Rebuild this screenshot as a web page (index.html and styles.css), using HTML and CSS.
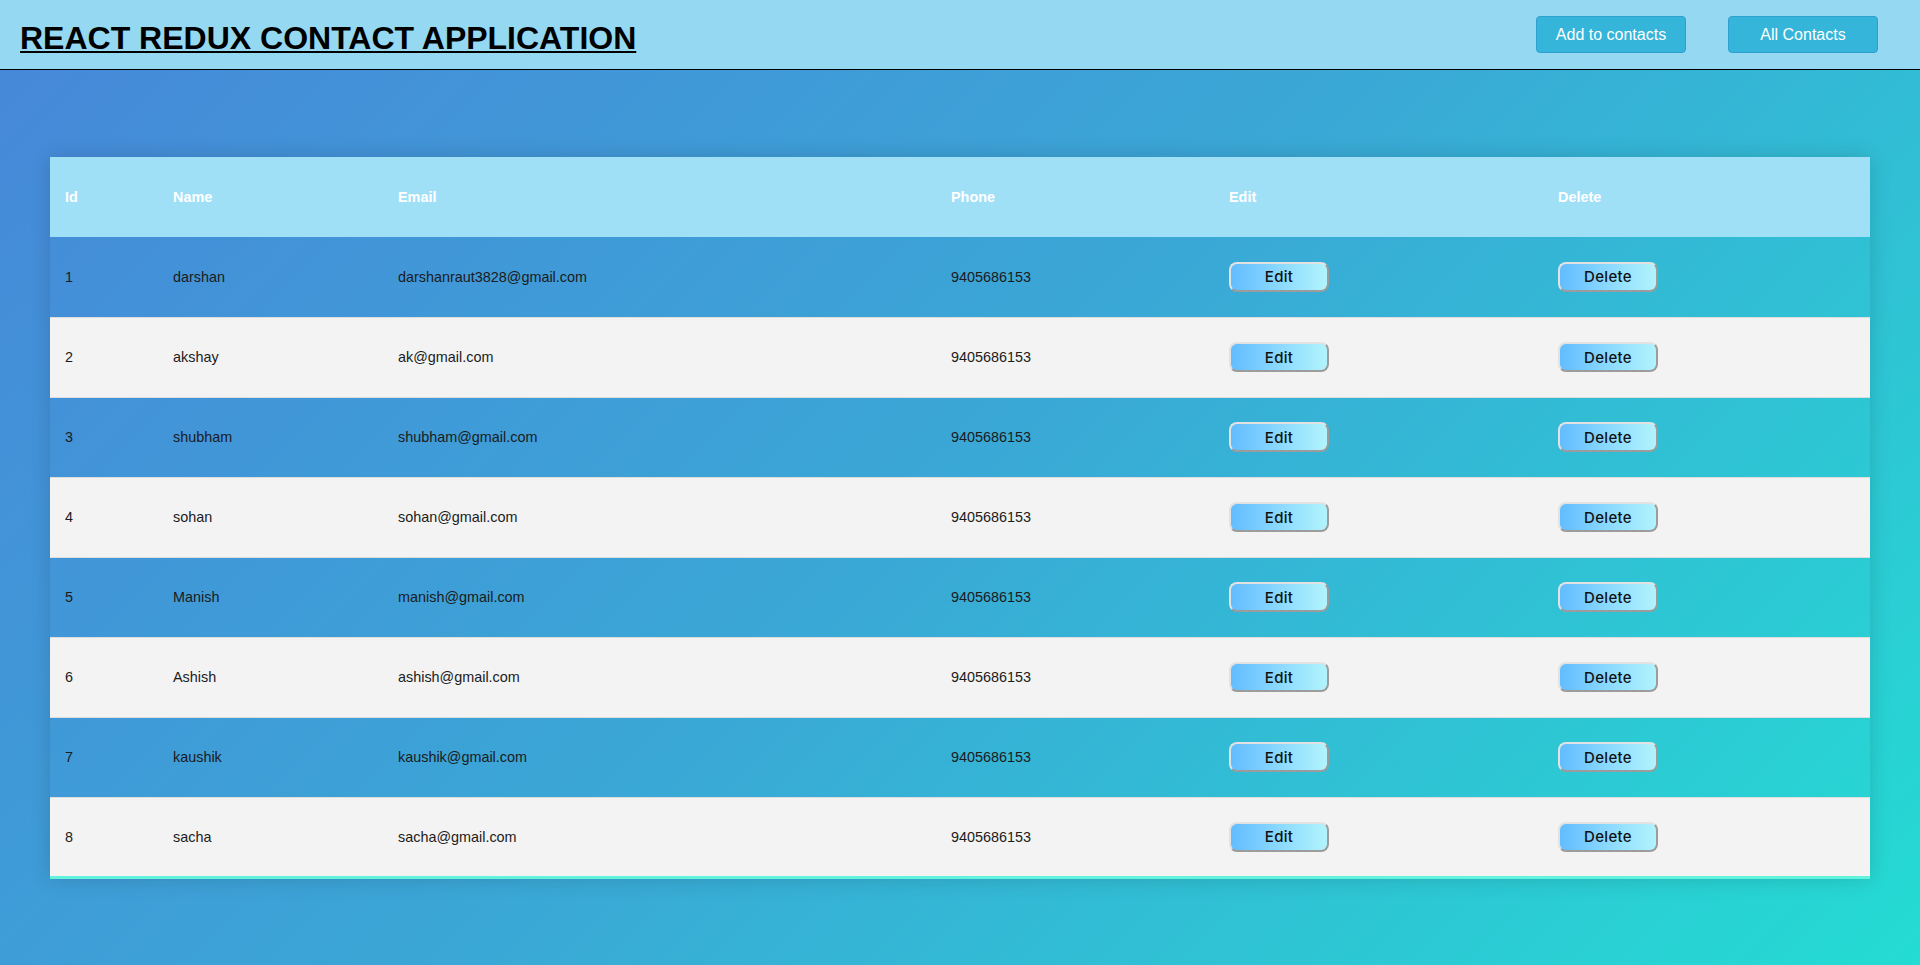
FILE: index.html
```html
<!DOCTYPE html>
<html lang="en">
<head>
<meta charset="utf-8">
<title>React Redux Contact Application</title>
<link rel="stylesheet" href="styles.css">
</head>
<body>
<header class="topbar">
  <h1 class="title">REACT REDUX CONTACT APPLICATION</h1>
  <nav class="nav">
    <button class="nav-btn">Add to contacts</button>
    <button class="nav-btn">All Contacts</button>
  </nav>
</header>
<main class="content">
  <table class="contacts">
    <colgroup>
      <col class="c-id"><col class="c-name"><col class="c-email"><col class="c-phone"><col class="c-edit"><col class="c-delete">
    </colgroup>
    <thead>
      <tr><th>Id</th><th>Name</th><th>Email</th><th>Phone</th><th>Edit</th><th>Delete</th></tr>
    </thead>
    <tbody>
      <tr><td>1</td><td>darshan</td><td>darshanraut3828@gmail.com</td><td>9405686153</td><td><button class="act">Edit</button></td><td><button class="act">Delete</button></td></tr>
      <tr><td>2</td><td>akshay</td><td>ak@gmail.com</td><td>9405686153</td><td><button class="act">Edit</button></td><td><button class="act">Delete</button></td></tr>
      <tr><td>3</td><td>shubham</td><td>shubham@gmail.com</td><td>9405686153</td><td><button class="act">Edit</button></td><td><button class="act">Delete</button></td></tr>
      <tr><td>4</td><td>sohan</td><td>sohan@gmail.com</td><td>9405686153</td><td><button class="act">Edit</button></td><td><button class="act">Delete</button></td></tr>
      <tr><td>5</td><td>Manish</td><td>manish@gmail.com</td><td>9405686153</td><td><button class="act">Edit</button></td><td><button class="act">Delete</button></td></tr>
      <tr><td>6</td><td>Ashish</td><td>ashish@gmail.com</td><td>9405686153</td><td><button class="act">Edit</button></td><td><button class="act">Delete</button></td></tr>
      <tr><td>7</td><td>kaushik</td><td>kaushik@gmail.com</td><td>9405686153</td><td><button class="act">Edit</button></td><td><button class="act">Delete</button></td></tr>
      <tr><td>8</td><td>sacha</td><td>sacha@gmail.com</td><td>9405686153</td><td><button class="act">Edit</button></td><td><button class="act">Delete</button></td></tr>
    </tbody>
  </table>
</main>
</body>
</html>
```
FILE: styles.css
```css
* { box-sizing: border-box; }

html, body {
  margin: 0;
  padding: 0;
}

body {
  min-height: 100vh;
  font-family: "Liberation Sans", Arial, sans-serif;
  background: linear-gradient(135deg, #4787d9 0%, #3aa8d6 50%, #24dcd3 100%);
  background-attachment: fixed;
}

.topbar {
  display: flex;
  align-items: flex-start;
  justify-content: space-between;
  height: 70px;
  background: #94d8f2;
  border-bottom: 1px solid #000;
}

.title {
  margin: 20px 0 0 20px;
  font-family: "Liberation Sans", Arial, sans-serif;
  font-size: 32px;
  line-height: 37px;
  font-weight: bold;
  color: #000;
  text-decoration: underline;
  text-decoration-thickness: 2px;
  text-underline-offset: 2px;
}

.nav {
  display: flex;
  gap: 42px;
  margin: 16px 42px 0 0;
}

.nav-btn {
  width: 150px;
  height: 37px;
  padding: 0;
  background: #35b5d9;
  border: 1px solid #2f9fd0;
  border-radius: 4px;
  color: #fff;
  font-family: "Liberation Sans", Arial, sans-serif;
  font-size: 16px;
}

.content {
  padding: 87px 50px 40px;
}

.contacts {
  width: 1820px;
  border-collapse: collapse;
  font-size: 14.4px;
  box-shadow: 0 0 20px rgba(0, 0, 0, 0.15);
  table-layout: fixed;
}

.c-id { width: 108px; }
.c-name { width: 225px; }
.c-email { width: 553px; }
.c-phone { width: 278px; }
.c-edit { width: 329px; }
.c-delete { width: 327px; }

.contacts thead tr {
  background: #a0e0f7;
  color: #fff;
  text-align: left;
}

.contacts th {
  height: 80px;
  padding: 0 15px;
  font-weight: bold;
}

.contacts td {
  height: 80px;
  padding: 0 15px;
  color: #1b1b1b;
}

.contacts tbody tr {
  border-bottom: 1px solid #dddddd;
}

.contacts tbody tr:nth-of-type(even) {
  background: #f3f3f3;
}

.contacts tbody tr:last-of-type {
  border-bottom: 3px solid #62f3dc;
}

.act {
  width: 100px;
  height: 30px;
  padding: 0;
  border: 2px solid;
  border-color: #e2e2e2 #9c9c9c #9c9c9c #e2e2e2;
  border-radius: 8px;
  background: linear-gradient(90deg, #62bcff 0%, #86d6ff 45%, #b2f4fd 100%);
  color: #111;
  font-family: Inter, "Noto Sans", sans-serif;
  font-size: 15px;
  font-weight: 500;
  letter-spacing: 0.3px;
}
```
